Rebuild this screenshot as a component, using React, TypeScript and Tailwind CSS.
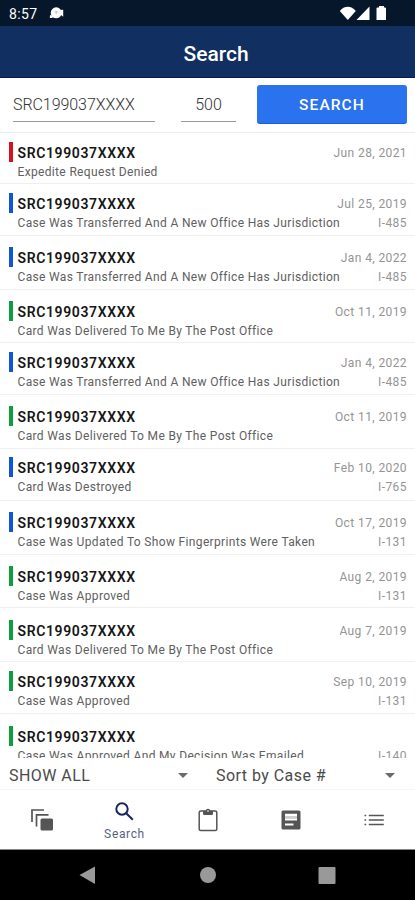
import React from "react";

type Case = {
  color: string;
  height: string;
  status: string;
  date: string;
  form?: string;
};

const RED = "bg-[#d8101c]";
const BLUE = "bg-[#1055d8]";
const GREEN = "bg-[#0d9f3f]";

const cases: Case[] = [
  { color: RED, height: "h-[51px] pt-[9px]", status: "Expedite Request Denied", date: "Jun 28, 2021" },
  { color: BLUE, height: "h-[52px] pt-[9px]", status: "Case Was Transferred And A New Office Has Jurisdiction", date: "Jul 25, 2019", form: "I-485" },
  { color: BLUE, height: "h-[54px] pt-[11px]", status: "Case Was Transferred And A New Office Has Jurisdiction", date: "Jan 4, 2022", form: "I-485" },
  { color: GREEN, height: "h-[53px] pt-[11px]", status: "Card Was Delivered To Me By The Post Office", date: "Oct 11, 2019" },
  { color: BLUE, height: "h-[52px] pt-[9px]", status: "Case Was Transferred And A New Office Has Jurisdiction", date: "Jan 4, 2022", form: "I-485" },
  { color: GREEN, height: "h-[54px] pt-[11px]", status: "Card Was Delivered To Me By The Post Office", date: "Oct 11, 2019" },
  { color: BLUE, height: "h-[52px] pt-[8px]", status: "Card Was Destroyed", date: "Feb 10, 2020", form: "I-765" },
  { color: BLUE, height: "h-[54px] pt-[11px]", status: "Case Was Updated To Show Fingerprints Were Taken", date: "Oct 17, 2019", form: "I-131" },
  { color: GREEN, height: "h-[53px] pt-[11px]", status: "Case Was Approved", date: "Aug 2, 2019", form: "I-131" },
  { color: GREEN, height: "h-[54px] pt-[12px]", status: "Card Was Delivered To Me By The Post Office", date: "Aug 7, 2019" },
  { color: GREEN, height: "h-[52px] pt-[9px]", status: "Case Was Approved", date: "Sep 10, 2019", form: "I-131" },
  { color: GREEN, height: "h-[54px] pt-[12px]", status: "Case Was Approved And My Decision Was Emailed", date: "", form: "I-140" },
];

function CaseRow({ item }: { item: Case }) {
  return (
    <div className={`flex shrink-0 border-b border-[#efefef] pr-2 pl-[9px] ${item.height}`}>
      <div className={`h-5 w-1 shrink-0 ${item.color}`} />
      <div className="ml-[4.5px] min-w-0 flex-1 pt-[1px]">
        <div className="flex h-5 items-center justify-between">
          <span className="text-[14px] leading-5 font-semibold tracking-[0.63px] text-[#161616]">SRC199037XXXX</span>
          <span className="text-[12px] leading-5 tracking-[0.4px] text-[#949494]">{item.date}</span>
        </div>
        <div className="flex h-[18px] items-center justify-between whitespace-nowrap">
          <span className="text-[12px] leading-[18px] tracking-[0.34px] text-[#606060]">{item.status}</span>
          <span className="text-[12px] leading-[18px] tracking-[0.45px] text-[#949494]">{item.form}</span>
        </div>
      </div>
    </div>
  );
}

function Caret() {
  return (
    <svg width="10" height="5" viewBox="0 0 10 5" fill="#6a6a6a">
      <path d="M0 0h10L5 5z" />
    </svg>
  );
}

export default function App() {
  return (
    <div className="flex h-[900px] w-[415px] flex-col overflow-hidden bg-white font-['Roboto',sans-serif]">
      <div className="flex h-[26px] shrink-0 items-center bg-[#06162b] pl-[9px] text-white">
        <span className="w-[30px] pt-[2px] text-[14px] leading-6 tracking-[0.35px]">8:57</span>
        <svg className="ml-[10px]" width="15" height="14" viewBox="0 0 15 14" fill="#fff">
          <circle cx="7.2" cy="6.8" r="5.5" />
          <path d="M1 9 4 10 3.500 12H0.800zM11 4l3.200-.3v7L12 9z" />
          <path d="M7.200 5v3.200M5.800 5.800h2.800" stroke="#a8adb5" strokeWidth=".7" />
        </svg>
        <svg className="ml-[275px]" width="50" height="16" viewBox="0 0 50 16" fill="#fff">
          <path d="M.8 6C5 .2 12.500.2 16.800 6L8.800 15z" />
          <path d="M30.500 1.500V15H17.500z" />
          <path d="M37.500 3.500q0-1 1-1h1.500V1h5v1.500h1q1 0 1 1V15h-9.500z" />
        </svg>
      </div>

      <header className="flex h-[52px] shrink-0 items-center justify-center border-b border-[#061f57] bg-[#113061] pt-[4px] pl-[17px]">
        <h1 className="text-[21px] leading-7 font-medium text-white">Search</h1>
      </header>

      <div className="flex h-[55px] shrink-0 items-start border-b border-[#ececec] pt-[7px] pl-[13px]">
        <div className="h-[37px] w-[142px] border-b border-[#9a9a9a] pt-[8px] text-[16px] leading-6 font-light tracking-[-0.06px] text-[#333]">SRC199037XXXX</div>
        <div className="ml-[26px] h-[37px] w-[55px] border-b border-[#9a9a9a] pt-[8px] text-center text-[16px] leading-6 font-light text-[#333]">500</div>
        <button className="ml-[21px] h-[39px] w-[150px] rounded-[3px] border-b border-[#145fd3] bg-[#2a72ee] pt-[3px] text-[15.5px] font-medium tracking-[1.1px] text-white">SEARCH</button>
      </div>

      <main className="flex h-[625px] shrink-0 flex-col overflow-hidden">
        {cases.map((item, i) => <CaseRow key={i} item={item} />)}
      </main>

      <div className="flex h-[32px] shrink-0 items-center border-b border-[#f5f5f5] pt-[4px] pl-[9px] text-[16px] tracking-[0.45px] text-[#4a4a4a]">
        <div className="flex w-[179px] items-center justify-between"><span>SHOW ALL</span><Caret /></div>
        <div className="ml-[28px] flex w-[179px] items-center justify-between"><span>Sort by Case #</span><Caret /></div>
      </div>

      <nav className="grid h-[60px] shrink-0 grid-cols-5 border-b border-[#888] text-[#555]">
        <div className="flex items-center justify-center">
          <svg width="22" height="22" viewBox="0 0 22 22" fill="none" stroke="currentColor" strokeWidth="1.7">
            <path d="M1 13V1h12M5.500 17.500V5.800h12" />
            <rect x="9.500" y="9.500" width="12.500" height="12" rx="1.500" fill="currentColor" stroke="none" />
          </svg>
        </div>
        <div className="flex flex-col items-center text-[#17275f]">
          <svg className="mt-[12px]" width="19" height="19" viewBox="0 0 19 19" fill="none" stroke="currentColor" strokeWidth="2">
            <circle cx="7" cy="7" r="5.7" />
            <path d="m11.200 11.200 6.600 6.600" />
          </svg>
          <span className="mt-[5px] text-[12px] leading-4 tracking-[0.65px] text-[#59617f]">Search</span>
        </div>
        <div className="flex items-center justify-center">
          <svg width="20" height="24" viewBox="0 0 20 24" fill="none" stroke="currentColor" strokeWidth="1.5">
            <rect x="1.200" y="3" width="17.600" height="19.500" rx="1.500" />
            <path d="M5 3h2.700a2.300 2.300 0 0 1 4.600 0H15v2.500q0 1.500-1.500 1.500h-7Q5 7 5 5.500z" fill="currentColor" stroke="none" />
            <circle cx="10" cy="3" r=".8" fill="#fff" stroke="none" />
          </svg>
        </div>
        <div className="flex items-center justify-center">
          <svg width="20" height="20" viewBox="0 0 20 20">
            <rect x=".5" y=".5" width="19" height="19" rx="1.5" fill="currentColor" />
            <path d="M4 4.800h12M4 9.300h12" stroke="#fff" strokeWidth="2.2" />
            <path d="M4 7h12" stroke="#ddd" strokeWidth="1.8" />
            <path d="M4 14.500h8.500" stroke="#fff" strokeWidth="2" />
          </svg>
        </div>
        <div className="flex items-center justify-center">
          <svg width="20" height="14" viewBox="0 0 20 14" stroke="currentColor" strokeWidth="1.6">
            <path d="M.5 2.500h1.700M4.800 2.500H19.800M.5 7h1.700M4.800 7H19.800M.5 11.500h1.700M4.800 11.500H19.800" />
          </svg>
        </div>
      </nav>

      <div className="flex h-[50px] shrink-0 items-center bg-black">
        <svg width="415" height="50" viewBox="0 0 415 50" fill="#999">
          <path d="M79.500 25 95 16.500v17.500z" />
          <circle cx="208" cy="25" r="8" />
          <rect x="318.500" y="17" width="17" height="17" rx="1" />
        </svg>
      </div>
    </div>
  );
}
